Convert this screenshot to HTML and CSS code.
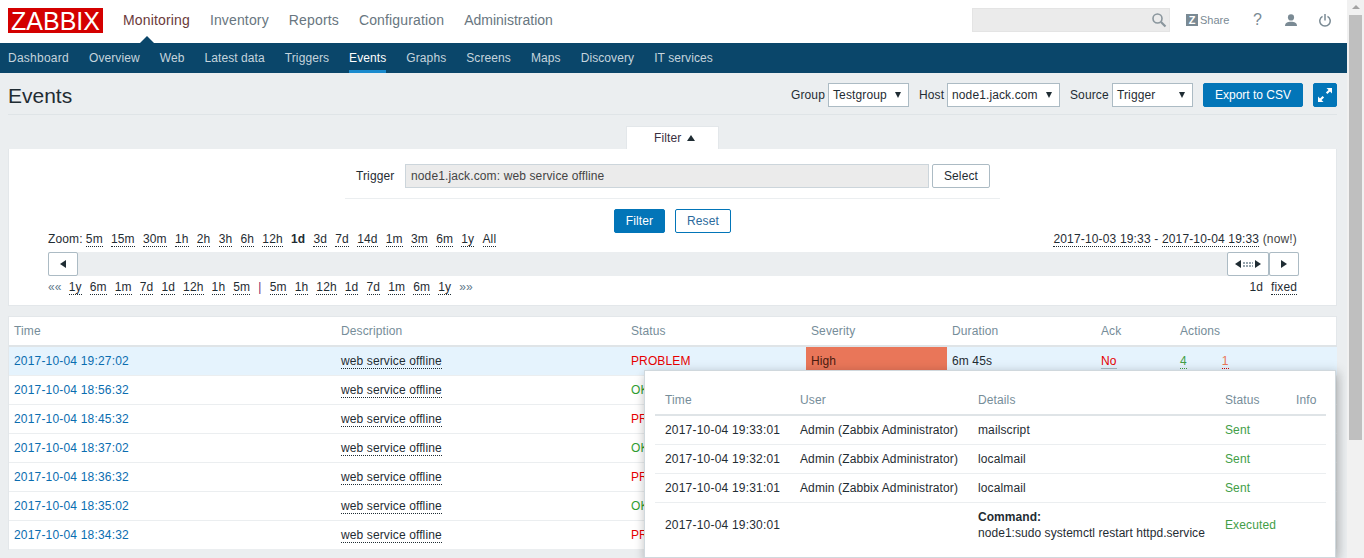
FILE: index.html
```html
<!DOCTYPE html>
<html lang="en">
<head>
<meta charset="utf-8">
<title>Events</title>
<link rel="stylesheet" href="styles.css">
</head>
<body>
<div class="app">
  <div class="page">
    <header class="top">
      <div class="logo">ZABBIX</div>
      <nav class="mainnav">
        <a class="active">Monitoring</a><a>Inventory</a><a>Reports</a><a>Configuration</a><a class="admin">Administration</a>
      </nav>
      <div class="tools">
        <div class="search">
          <svg width="16" height="16" viewBox="0 0 16 16"><circle cx="6.500" cy="6.500" r="4.500" fill="none" stroke="#8a969d" stroke-width="1.600"/><path d="M10 10l4.500 4.500" stroke="#8a969d" stroke-width="2.200"/></svg>
        </div>
        <div class="share"><span class="zbox">Z</span>Share</div>
        <div class="help">?</div>
        <svg class="usericon" width="12" height="12" viewBox="0 0 14 14"><circle cx="7" cy="4" r="3.600" fill="#7a8a94"/><path d="M0 14c0-3.600 2.800-5 7-5s7 1.400 7 5z" fill="#7a8a94"/></svg>
        <svg class="powericon" width="12" height="14" viewBox="0 0 12 14"><path d="M3.500 3.300a5.200 5.200 0 1 0 5 0" fill="none" stroke="#7a8a94" stroke-width="1.500"/><path d="M6 1v6.500" stroke="#7a8a94" stroke-width="1.500"/></svg>
      </div>
    </header>
    <nav class="subnav">
      <a class="dash">Dashboard</a><a>Overview</a><a>Web</a><a>Latest data</a><a>Triggers</a><a class="active">Events</a><a>Graphs</a><a>Screens</a><a>Maps</a><a>Discovery</a><a>IT services</a>
    </nav>
    <main class="content">
      <div class="titlebar">
        <h1>Events</h1>
        <div class="controls">
          <label>Group</label><div class="select w-group">Testgroup</div>
          <label>Host</label><div class="select w-host">node1.jack.com</div>
          <label>Source</label><div class="select w-source">Trigger</div>
          <div class="btn primary export">Export to CSV</div>
          <div class="btn primary full">
            <svg width="16" height="16" viewBox="0 0 16 16" fill="#fff"><path d="M9.500 1H15v5.500l-2-2-2.600 2.600-1.500-1.500L11.500 3z"/><path d="M6.500 15H1V9.500l2 2 2.600-2.600 1.500 1.500L4.500 13z"/></svg>
          </div>
        </div>
      </div>
      <div class="tabrow"><div class="tab">Filter <span class="uptri"></span></div></div>
      <section class="filter">
        <div class="trigger-row">
          <span class="tlabel">Trigger</span>
          <div class="tinput">node1.jack.com: web service offline</div>
          <div class="btn ghost select-btn">Select</div>
        </div>
        <div class="filter-btns">
          <div class="btn primary f-btn">Filter</div>
          <div class="btn outline r-btn">Reset</div>
        </div>
        <div class="zoomrow">
          <div class="links zoomlinks">
            <span class="zlabel">Zoom:</span><a>5m</a><a>15m</a><a>30m</a><a>1h</a><a>2h</a><a>3h</a><a>6h</a><a>12h</a><b>1d</b><a>3d</a><a>7d</a><a>14d</a><a>1m</a><a>3m</a><a>6m</a><a>1y</a><a>All</a>
          </div>
          <div class="range"><a>2017-10-03 19:33</a> - <a>2017-10-04 19:33</a> <span class="now">(now!)</span></div>
        </div>
        <div class="scrollbar">
          <div class="sbtn"><span class="tri-l"></span></div>
          <div class="sright">
            <div class="sbtn wide"><span class="tri-l"></span><span class="dots"></span><span class="tri-r"></span></div>
            <div class="sbtn"><span class="tri-r"></span></div>
          </div>
        </div>
        <div class="navrow">
          <div class="links navlinks">
            <span class="mute">««</span><a>1y</a><a>6m</a><a>1m</a><a>7d</a><a>1d</a><a>12h</a><a>1h</a><a>5m</a><span class="sep">|</span><a>5m</a><a>1h</a><a>12h</a><a>1d</a><a>7d</a><a>1m</a><a>6m</a><a>1y</a><span class="mute">»»</span>
          </div>
          <div class="period"><span>1d</span><a>fixed</a></div>
        </div>
      </section>
      <section class="events">
        <table class="grid">
          <colgroup><col class="c1"><col class="c2"><col class="c3"><col class="c4"><col class="c5"><col class="c6"><col class="c7"></colgroup>
          <thead><tr><th>Time</th><th>Description</th><th>Status</th><th>Severity</th><th>Duration</th><th>Ack</th><th>Actions</th></tr></thead>
          <tbody>
            <tr class="hl"><td class="time">2017-10-04 19:27:02</td><td><a class="desc">web service offline</a></td><td class="red">PROBLEM</td><td class="high">High</td><td>6m 45s</td><td><a class="no">No</a></td><td><a class="act4">4</a><a class="act1">1</a></td></tr>
            <tr><td class="time">2017-10-04 18:56:32</td><td><a class="desc">web service offline</a></td><td class="green">OK</td><td></td><td></td><td></td><td></td></tr>
            <tr><td class="time">2017-10-04 18:45:32</td><td><a class="desc">web service offline</a></td><td class="red">PROBLEM</td><td></td><td></td><td></td><td></td></tr>
            <tr><td class="time">2017-10-04 18:37:02</td><td><a class="desc">web service offline</a></td><td class="green">OK</td><td></td><td></td><td></td><td></td></tr>
            <tr><td class="time">2017-10-04 18:36:32</td><td><a class="desc">web service offline</a></td><td class="red">PROBLEM</td><td></td><td></td><td></td><td></td></tr>
            <tr><td class="time">2017-10-04 18:35:02</td><td><a class="desc">web service offline</a></td><td class="green">OK</td><td></td><td></td><td></td><td></td></tr>
            <tr><td class="time">2017-10-04 18:34:32</td><td><a class="desc">web service offline</a></td><td class="red">PROBLEM</td><td></td><td></td><td></td><td></td></tr>
          </tbody>
        </table>
      </section>
    </main>
    <div class="popup">
      <table class="ptable">
        <colgroup><col class="p1"><col class="p2"><col class="p3"><col class="p4"><col class="p5"></colgroup>
        <thead><tr><th>Time</th><th>User</th><th>Details</th><th>Status</th><th>Info</th></tr></thead>
        <tbody>
          <tr><td class="ptime">2017-10-04 19:33:01</td><td>Admin (Zabbix Administrator)</td><td>mailscript</td><td class="sent">Sent</td><td></td></tr>
          <tr><td class="ptime">2017-10-04 19:32:01</td><td>Admin (Zabbix Administrator)</td><td>localmail</td><td class="sent">Sent</td><td></td></tr>
          <tr><td class="ptime">2017-10-04 19:31:01</td><td>Admin (Zabbix Administrator)</td><td>localmail</td><td class="sent">Sent</td><td></td></tr>
          <tr class="last"><td class="ptime">2017-10-04 19:30:01</td><td></td><td class="cmd"><b>Command:</b><br>node1:sudo systemctl restart httpd.service</td><td class="sent">Executed</td><td></td></tr>
        </tbody>
      </table>
    </div>
  </div>
  <div class="vscroll"><div class="vup"></div><div class="vthumb"></div></div>
</div>
</body>
</html>
```
FILE: styles.css
```css
* { box-sizing: border-box; }
html, body { margin: 0; height: 558px; overflow: hidden; }
body { font: 12px/14px "Liberation Sans", Arial, sans-serif; letter-spacing: .12px; color: #1f2c33; background: #ebeef0; }
.app { display: flex; height: 558px; }
.page { position: relative; width: 1347px; height: 558px; overflow: hidden; }

.top { display: flex; align-items: flex-start; height: 43px; background: #fff; position: relative; }
.logo { margin: 8px 0 0 8px; width: 95px; height: 25px; background: #d40000; color: #fff; font-size: 25px; line-height: 26px; letter-spacing: 0; text-align: center; }
.mainnav { display: flex; margin-left: 10px; font-size: 14px; line-height: 16px; letter-spacing: .15px; }
.mainnav a { padding: 12px 10px 0; position: relative; color: #687680; }
.mainnav a.admin { letter-spacing: 0; }
.mainnav a.active { color: #6b3a3a; }
.mainnav a.active::after { content: ""; position: absolute; left: 27px; top: 36px; border: 7px solid transparent; border-top: 0; border-bottom-color: #0a466a; }
.tools { display: flex; align-items: center; margin-left: auto; height: 24px; margin-top: 8px; color: #7a8a94; }
.search { width: 198px; height: 24px; background: #ebebeb; border: 1px solid #e4e4e4; display: flex; align-items: center; justify-content: flex-end; padding-right: 2px; }
.share { display: flex; align-items: center; margin-left: 16px; font-size: 11px; width: 44px; letter-spacing: 0; }
.zbox { width: 12px; height: 12px; background: #7a8a94; color: #fff; font-weight: bold; font-size: 11px; line-height: 12px; text-align: center; margin-right: 2px; }
.help { font-size: 16px; margin-left: 23px; width: 8px; letter-spacing: 0; }
.usericon { margin-left: 24px; }
.powericon { margin-left: 22px; margin-right: 16px; }

.subnav { display: flex; height: 30px; background: #0a466a; padding-left: 8px; gap: 20px; color: #c5d4dd; line-height: 30px; letter-spacing: .09px; }
.subnav a { display: block; height: 30px; }
.subnav a.dash { letter-spacing: .25px; }
.subnav a.active { color: #fff; border-bottom: 3px solid #1a8acd; }

.content { padding: 0 10px 0 8px; }
.titlebar { display: flex; justify-content: space-between; align-items: center; height: 42px; border-bottom: 1px solid #dfe4e7; }
h1 { margin: 4px 0 0; font-size: 21px; font-weight: normal; line-height: 24px; letter-spacing: 0; color: #1f2c33; }
.controls { display: flex; align-items: center; margin-top: 2px; }
.controls label { width: 33px; margin-right: 4px; margin-left: 10px; color: #1f2c33; white-space: nowrap; }
.controls label:nth-of-type(2) { width: 24px; }
.controls label:nth-of-type(3) { width: 38px; }
.select { height: 24px; background: #fff; border: 1px solid #acbbc4; padding-left: 4px; line-height: 22px; position: relative; }
.select::after { content: ""; position: absolute; right: 7px; top: 8px; border: 3px solid transparent; border-bottom: 0; border-top: 6px solid #1f2c33; }
.w-group { width: 81px; }
.w-host { width: 113px; }
.w-source { width: 81px; }
.btn { height: 24px; border-radius: 2px; text-align: center; line-height: 22px; }
.btn.primary { background: #0275b8; border: 1px solid #0275b8; color: #fff; }
.export { width: 100px; margin-left: 10px; letter-spacing: 0; }
.full { width: 24px; margin-left: 10px; display: flex; align-items: center; justify-content: center; }

.tabrow { display: flex; justify-content: center; height: 34px; padding-top: 11px; }
.tab { width: 93px; height: 23px; padding-left: 4px; background: #fff; border: 1px solid #e3e7ea; border-bottom: 0; text-align: center; line-height: 22px; color: #3a3040; }
.uptri { display: inline-block; border: 4px solid transparent; border-top: 0; border-bottom: 6px solid #1f2c33; margin-left: 2px; vertical-align: 1px; }

.filter { background: #fff; border: 1px solid #e3e7ea; border-top: 0; height: 157px; padding: 15px 39px 0; }
.trigger-row { display: flex; align-items: center; width: 655px; margin-left: 297px; height: 35px; padding-bottom: 10px; border-bottom: 1px solid #ebeef0; }
.tlabel { margin-left: 11px; width: 49px; }
.tinput { width: 524px; height: 24px; background: #ebebeb; border: 1px solid #ccd5db; padding-left: 5px; line-height: 22px; color: #444; }
.select-btn { width: 58px; margin-left: 3px; border: 1px solid #acbbc4; }
.filter-btns { display: flex; justify-content: center; gap: 10px; margin-top: 10px; }
.f-btn { width: 51px; }
.r-btn { width: 56px; border: 1px solid #0275b8; color: #2c6a9c; }
.zoomrow, .navrow { display: flex; justify-content: space-between; height: 14px; }
.zoomrow { margin-top: -1px; }
.links { display: flex; white-space: nowrap; }
.zoomlinks { gap: 8.25px; }
.navlinks { gap: 8.1px; }
.navlinks .mute:first-child { margin-right: -1px; }
.zlabel { margin-right: -5px; }
.links a, .range a, .period a { border-bottom: 1px dotted #1f2c33; height: 15px; }
.range { letter-spacing: .16px; }
.mute { color: #5f7a8c; }
.sep { color: #7a2a6a; }
.now { color: #444; }
.scrollbar { display: flex; justify-content: space-between; height: 24px; background: #ebeef0; margin: 6px -2px 0 0; }
.sright { display: flex; }
.sbtn { width: 30px; height: 24px; background: #fff; border: 1px solid #acbbc4; border-radius: 2px; display: flex; align-items: center; justify-content: center; }
.sbtn.wide { width: 42px; gap: 2px; }
.tri-l { border: 4px solid transparent; border-left: 0; border-right: 6px solid #1f2c33; }
.tri-r { border: 4px solid transparent; border-right: 0; border-left: 6px solid #1f2c33; }
.dots { width: 10px; height: 5px; background: radial-gradient(circle at 1px 1px, #97a5ae 1px, transparent 1px) 0 0 / 3px 3px; }
.navrow { margin-top: 4px; }
.period { display: flex; gap: 8px; }

.events { margin-top: 10px; background: #fff; border: 1px solid #e3e7ea; border-bottom: 0; }
.grid { border-collapse: collapse; table-layout: fixed; width: 1328px; }
.c1 { width: 327px; } .c2 { width: 290px; } .c3 { width: 180px; } .c4 { width: 141px; } .c5 { width: 149px; } .c6 { width: 79px; } .c7 { width: 162px; }
.grid th { height: 29px; padding: 0 5px; text-align: left; font-weight: normal; color: #768d99; border-bottom: 2px solid #dfe4e7; }
.grid td { height: 29px; padding: 0 5px; border-bottom: 1px solid #ebeef0; white-space: nowrap; }
.grid tr.hl td { background: #e5f3fd; }
.grid td.time { color: #0a6db0; letter-spacing: .18px; }
.grid tr.hl td.high { background: #e97659; color: #4a1c10; }
.desc { border-bottom: 1px dotted #1f2c33; }
.red { color: #e60000; }
.green { color: #2f9e30; }
.no { color: #e60000; border-bottom: 1px solid #acbbc4; }
.act4 { color: #429e47; border-bottom: 1px dotted #429e47; }
.act1 { color: #e97659; border-bottom: 1px dotted #dc0000; margin-left: 35px; }

.popup { position: absolute; left: 644px; top: 370px; width: 692px; height: 188px; background: #fff; border: 1px solid #d0d8dd; box-shadow: 0 6px 10px rgba(0,0,0,.2), 4px 0 10px rgba(0,0,0,.12); padding: 14px 10px 0; }
.ptable { border-collapse: collapse; table-layout: fixed; width: 671px; }
.p1 { width: 135px; } .p2 { width: 178px; } .p3 { width: 247px; } .p4 { width: 71px; } .p5 { width: 40px; }
.ptable th { height: 30px; padding: 0 10px; text-align: left; font-weight: normal; color: #768d99; border-bottom: 2px solid #dfe4e7; }
.ptable td { height: 29px; padding: 0 10px; border-bottom: 1px solid #ebeef0; white-space: nowrap; }
.ptable td.ptime { letter-spacing: .2px; }
.ptable td.cmd { letter-spacing: .05px; }
.ptable tr.last td { height: 45px; border-bottom: 0; line-height: 16px; }
.sent { color: #429e47; }

.vscroll { width: 17px; height: 558px; background: #f1f1f1; position: relative; padding: 15px 2px 0; }
.vup { position: absolute; left: 5px; top: 5px; border: 4px solid transparent; border-top: 0; border-bottom: 4px solid #a3a3a3; }
.vthumb { height: 425px; background: #bfbfbf; }
```
